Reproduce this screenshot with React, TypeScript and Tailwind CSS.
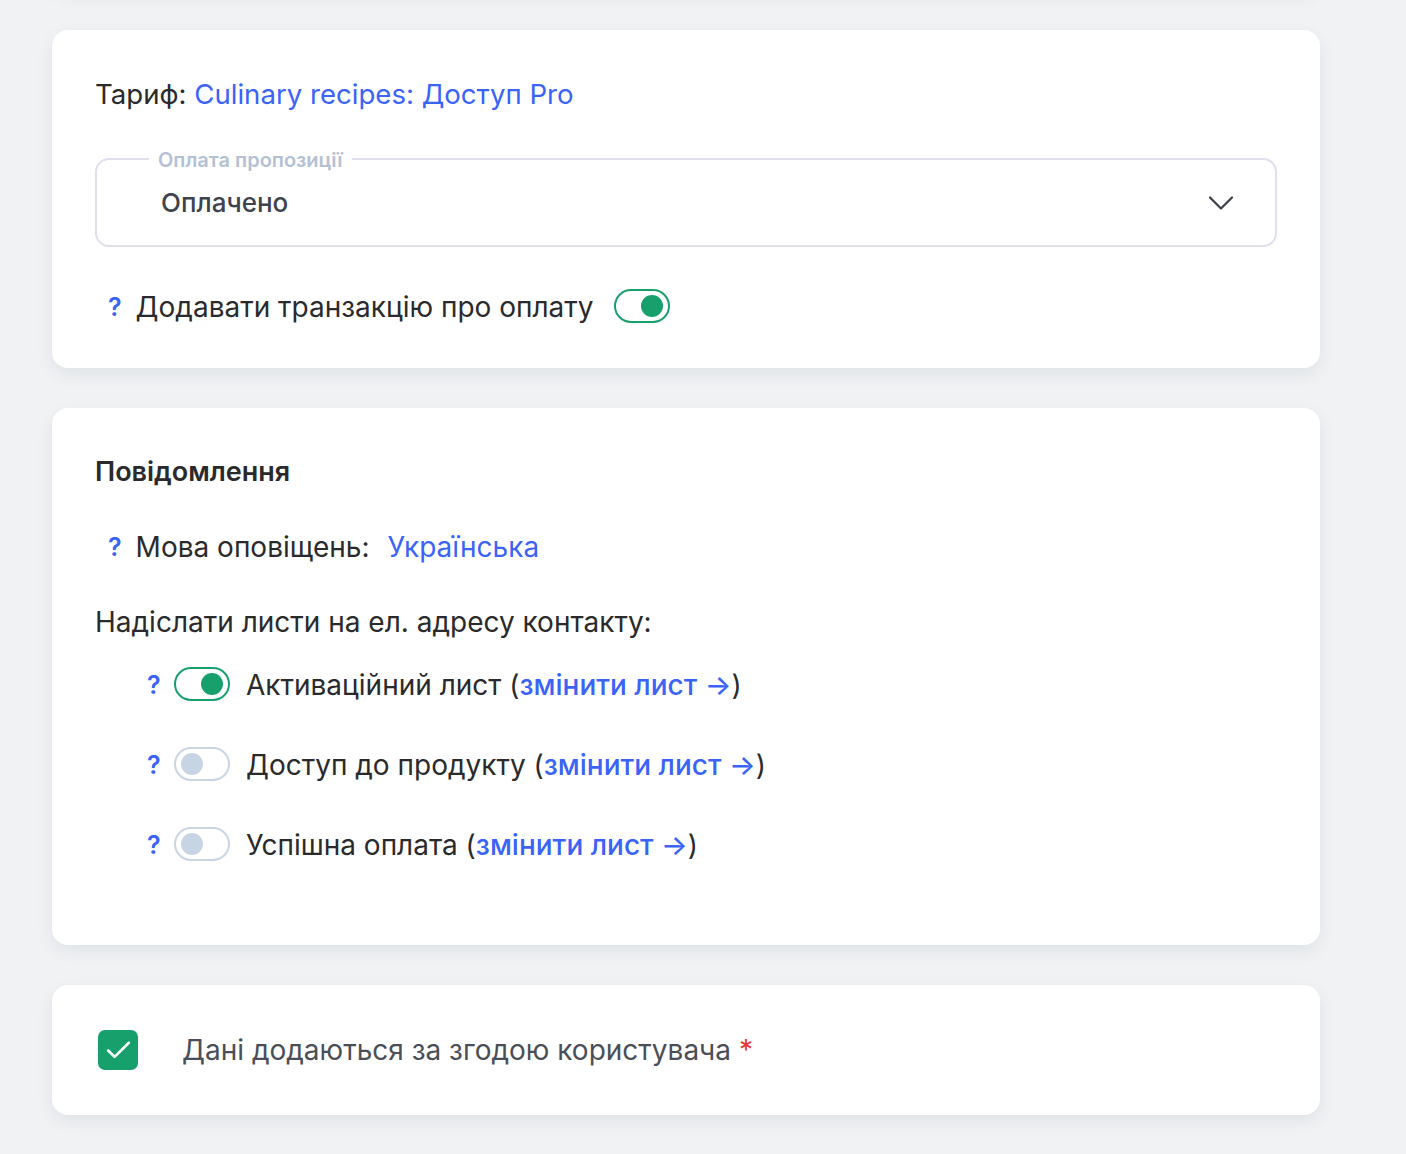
import { Check, ChevronDown } from "lucide-react";

function Toggle({ on }: { on: boolean }) {
  return (
    <span
      className={`inline-flex items-center w-[56px] h-[34px] rounded-full border-2 px-[5px] shrink-0 bg-white ${
        on ? "border-[#17a06b] justify-end" : "border-[#c9d5e4] justify-start"
      }`}
    >
      <span className={`w-[22px] h-[22px] rounded-full ${on ? "bg-[#17a06b]" : "bg-[#c6d4e4]"}`} />
    </span>
  );
}

function Hint() {
  return <span className="text-[#3b63f6] font-semibold text-[25px] leading-none">?</span>;
}

function EmailRow({ on, label }: { on: boolean; label: string }) {
  return (
    <div className="flex items-center h-[40px]">
      <span className="w-[20px] flex justify-start"><Hint /></span>
      <span className="ml-[7px]"><Toggle on={on} /></span>
      <span className="ml-[16px]">
        {label} (<a className="text-[#3b63f6] font-medium">змінити лист →</a>)
      </span>
    </div>
  );
}

export default function App() {
  return (
    <div
      className="min-h-screen bg-[#f0f2f4] text-[#2a2a2c] text-[28px] overflow-hidden"
      style={{ fontFamily: "Inter, 'Noto Sans', sans-serif" }}
    >
      <div className="w-[1268px] ml-[52px] flex flex-col gap-[40px] pb-[40px]">
        {/* tail of previous card, above the fold */}
        <div className="h-[40px] -mt-[50px] bg-white rounded-b-[16px] shadow-[0_6px_18px_rgba(20,35,60,0.07)]" />

        {/* Tariff + payment */}
        <section className="bg-white rounded-[16px] shadow-[0_6px_18px_rgba(20,35,60,0.07)] px-[43px] pt-[48px] pb-[40px]">
          <p className="leading-[32px] text-[27.6px]">
            Тариф: <span className="text-[#3b63f6]">Culinary recipes: Доступ Pro</span>
          </p>

          <div className="relative mt-[48px] h-[89px] border-2 border-[#e0dfec] rounded-[14px] flex items-center pl-[64px] pr-[32px]">
            <span className="absolute -top-[12px] left-[52px] bg-white px-[9px] text-[20px] font-semibold leading-[24px] text-[#b4c1d4]">
              Оплата пропозиції
            </span>
            <span className="flex-1 text-[26px] font-medium text-[#3e434d]">Оплачено</span>
            <ChevronDown className="w-[44px] h-[44px] text-[#3e434d]" strokeWidth={1.25} />
          </div>

          <div className="flex items-center mt-[39px] pl-[13px]">
            <Hint />
            <span className="ml-[14px]">Додавати транзакцію про оплату</span>
            <span className="ml-[20px]"><Toggle on /></span>
          </div>
        </section>

        {/* Notifications */}
        <section className="bg-white rounded-[16px] shadow-[0_6px_18px_rgba(20,35,60,0.07)] px-[43px] pt-[48px] pb-[80px]">
          <h2 className="font-semibold text-[27px] leading-[32px]">Повідомлення</h2>

          <div className="flex items-center mt-[43px] pl-[13px] leading-[32px]">
            <Hint />
            <span className="ml-[14px]">Мова оповіщень:</span>
            <span className="ml-[18px] text-[#3b63f6]">Українська</span>
          </div>

          <p className="mt-[43px] leading-[32px]">Надіслати листи на ел. адресу контакту:</p>

          <div className="mt-[27px] pl-[52px] flex flex-col gap-[40px]">
            <EmailRow on label="Активаційний лист" />
            <EmailRow on={false} label="Доступ до продукту" />
            <EmailRow on={false} label="Успішна оплата" />
          </div>
        </section>

        {/* Consent */}
        <section className="bg-white rounded-[16px] shadow-[0_6px_18px_rgba(20,35,60,0.07)] px-[46px] py-[44px] flex items-center">
          <span className="w-[40px] h-[40px] rounded-[7px] bg-[#17a06b] flex items-center justify-center">
            <Check className="w-[31px] h-[31px] text-white" strokeWidth={2} />
          </span>
          <span className="ml-[44px] text-[#4a4e58]">
            Дані додаються за згодою користувача <span className="text-[#e53935]">*</span>
          </span>
        </section>
      </div>
    </div>
  );
}
